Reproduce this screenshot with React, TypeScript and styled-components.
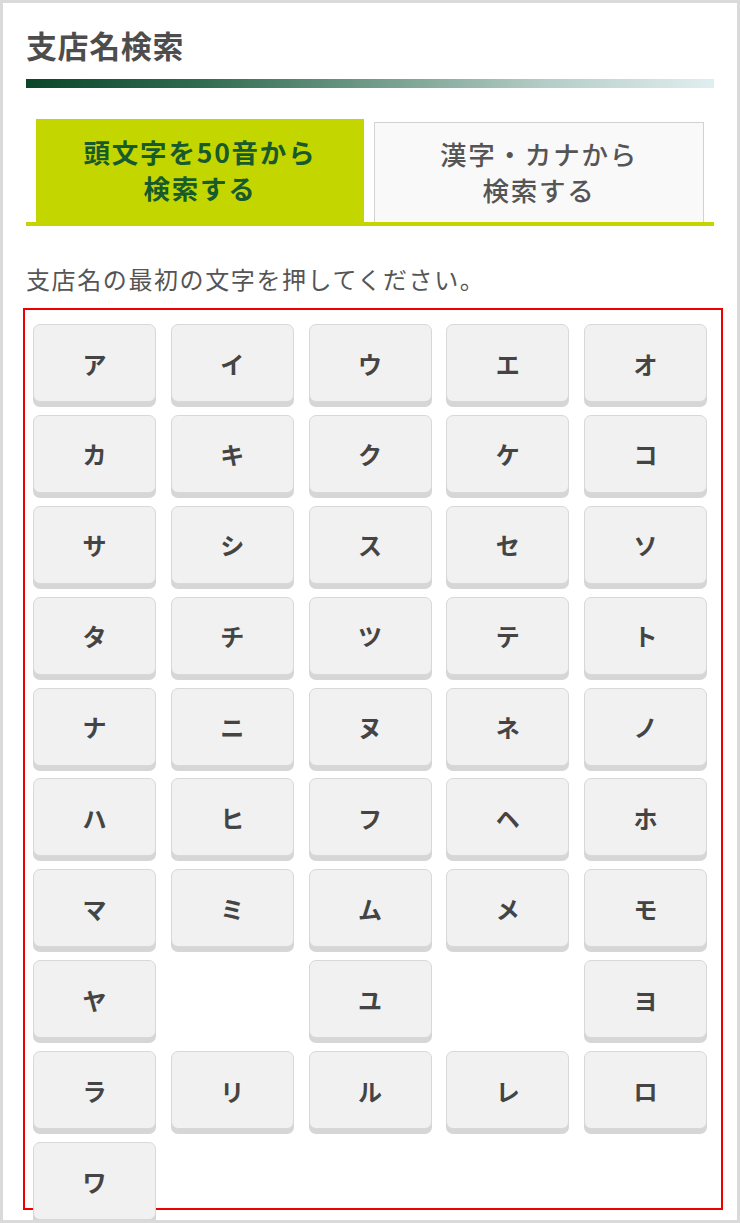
import * as React from "react";
import styled, { createGlobalStyle } from "styled-components";

const GlobalStyle = createGlobalStyle`
  html, body {
    margin: 0;
    padding: 0;
    background: #ffffff;
  }
  body {
    font-family: "Noto Sans CJK JP", "Noto Sans", sans-serif;
  }
`;

const ROWS: string[][] = [
  ["ア", "イ", "ウ", "エ", "オ"],
  ["カ", "キ", "ク", "ケ", "コ"],
  ["サ", "シ", "ス", "セ", "ソ"],
  ["タ", "チ", "ツ", "テ", "ト"],
  ["ナ", "ニ", "ヌ", "ネ", "ノ"],
  ["ハ", "ヒ", "フ", "ヘ", "ホ"],
  ["マ", "ミ", "ム", "メ", "モ"],
  ["ヤ", "", "ユ", "", "ヨ"],
  ["ラ", "リ", "ル", "レ", "ロ"],
  ["ワ", "", "", "", ""],
];

// markup
const App = () => {
  const [tab, setTab] = React.useState(0);

  return (
    <>
      <GlobalStyle />
      <Frame>
        <Title>支店名検索</Title>
        <GradientBar />

        <TabRow>
          <Tab $active={tab === 0} onClick={() => setTab(0)}>
            頭文字を50音から
            <br />
            検索する
          </Tab>
          <Tab $active={tab === 1} onClick={() => setTab(1)}>
            漢字・カナから
            <br />
            検索する
          </Tab>
        </TabRow>

        <Lead>支店名の最初の文字を押してください。</Lead>

        <KanaBox>
          <KanaGrid>
            {ROWS.flat().map((k, i) =>
              k ? <KanaButton key={i}>{k}</KanaButton> : <Blank key={i} />
            )}
          </KanaGrid>
        </KanaBox>
      </Frame>
    </>
  );
};

const Frame = styled.div`
  box-sizing: border-box;
  height: 1223px;
  border: 3px solid #dadada;
  padding: 0 23px;
  overflow: hidden;
  background: #ffffff;
`;

const Title = styled.h1`
  margin: 0;
  padding-top: 26px;
  font-size: 31px;
  line-height: 32px;
  font-weight: 700;
  color: #4d4d4d;
  letter-spacing: 0.6px;
`;

const GradientBar = styled.div`
  margin-top: 18px;
  height: 9px;
  background: linear-gradient(
    to right,
    #0a4729 0%,
    #2f6b4f 25%,
    #6f9a88 50%,
    #b3ccc5 75%,
    #e1eef0 100%
  );
`;

const TabRow = styled.div`
  display: flex;
  align-items: flex-end;
  gap: 10px;
  margin-top: 31px;
  padding: 0 10px;
  border-bottom: 4px solid #c6d400;
`;

const Tab = styled.button<{ $active: boolean }>`
  flex: 1;
  box-sizing: border-box;
  height: ${(p) => (p.$active ? "103px" : "100px")};
  margin: 0;
  padding: 0 0 2px;
  border: ${(p) => (p.$active ? "none" : "1px solid #d2d2d2")};
  border-bottom: none;
  background: ${(p) => (p.$active ? "#c4d600" : "#f9f9f9")};
  color: ${(p) => (p.$active ? "#175a2c" : "#555555")};
  font-family: "Noto Sans CJK JP", "Noto Sans", sans-serif;
  font-size: 26.5px;
  line-height: 36px;
  letter-spacing: 1.8px;
  font-weight: ${(p) => (p.$active ? 700 : 500)};
  text-align: center;
  cursor: pointer;
`;

const Lead = styled.p`
  margin: 38px 0 0;
  font-size: 24px;
  line-height: 30px;
  letter-spacing: 1.6px;
  color: #555555;
  font-weight: 400;
`;

const KanaBox = styled.div`
  box-sizing: border-box;
  height: 902px;
  margin: 14px -9px 0 -3px;
  border: 2px solid #ee0000;
  padding: 14px 0 0 8px;
`;

const KanaGrid = styled.div`
  display: grid;
  grid-template-columns: repeat(5, 123px);
  grid-auto-rows: 78px;
  column-gap: 14.75px;
  row-gap: 12.9px;
`;

const KanaButton = styled.button`
  box-sizing: border-box;
  margin: 0;
  padding: 0;
  border: 1px solid #d8d8d8;
  border-radius: 7px;
  background: #f1f1f1;
  box-shadow: 0 5px 0 #d6d6d6;
  color: #444444;
  font-family: "Noto Sans CJK JP", "Noto Sans", sans-serif;
  font-size: 24px;
  font-weight: 700;
  cursor: pointer;
`;

const Blank = styled.div``;

export default App;
